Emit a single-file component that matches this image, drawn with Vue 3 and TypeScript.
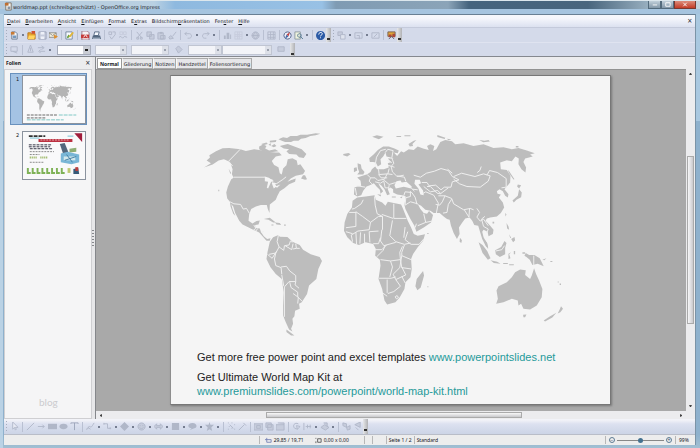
<script setup lang="ts">
import { ref } from 'vue'

interface Shape { d: string; f?: string; s?: string }
interface Tool { kind: 'icon' | 'drop' | 'sep' | 'more' | 'grip' | 'select' | 'spin'; name?: string; size?: string; on?: boolean }

const G = '#b0b7c8'
const L = '#c6ccdc'

const icons: Record<string, Shape[]> = {
  Neu: [{ d: 'M2 1h4l2 2v6H2z', f: '#f4f6fa', s: '#69788f' }, { d: 'M1 1h4v3H1z', f: '#c87a33' }, { d: 'M3 5h4v3H3z', f: '#7698bd' }],
  Öffnen: [{ d: 'M1 2h3l1 1h4v6H1z', f: '#e9a52c', s: '#b9741c' }, { d: 'M5 0h4v3H5z', f: '#d2532e' }, { d: 'M2 5h7L8 9H1z', f: '#ffd561' }],
  Speichern: [{ d: 'M1 1h8v8H1z', f: L, s: '#9ba4b8' }, { d: 'M3 1h4v3H3zM3 6h4v3H3z', f: '#edf0f8' }],
  Senden: [{ d: 'M0 2h8v5H0z', f: '#f4f1e2', s: '#8c8c88' }, { d: 'M0 2l4 3 4-3', s: '#8c8c88' }, { d: 'M5 4l5 2-4 3z', f: '#dd9132' }],
  Bearbeiten: [{ d: 'M1 1h7v8H1z', f: '#f8faff', s: '#73859d' }, { d: 'M2 7l2-3 2 2-3 2z', f: '#63a046' }, { d: 'M4 6l4-5 2 1-4 5z', f: '#e1b739' }],
  PDF: [{ d: 'M1 0h6l2 2v8H1z', f: '#f5f1f4', s: '#9b7487' }, { d: 'M0 4h9v4H0z', f: '#c43a3a' }, { d: 'M3 7l2-3 2 3', s: '#fff' }],
  Drucken: [{ d: 'M3 1h5L7 5H2z', f: '#f7faff', s: '#566983' }, { d: 'M1 5h8l1 4H0z', f: '#53677f' }, { d: 'M1 8h8', s: '#c8d4e4' }],
  Prüfen: [{ d: 'M1 1h3v3H1zM5 1h3v3', s: G }, { d: 'M2 6l2 3 4-5', s: G }],
  AutoPrüfung: [{ d: 'M1 1h3v3H1zM5 1h3v3H5z', s: L }, { d: 'M0 7l2-1 2 2 2-2 3 1', s: G }],
  Ausschneiden: [{ d: 'M2 1l5 6M8 1L3 7', s: G }, { d: 'M2 7h2v2H2zM6 7h2v2H6z', s: G }],
  Kopieren: [{ d: 'M1 1h5v5H1zM4 4h5v5H4z', f: L, s: G }],
  Einfügen: [{ d: 'M1 2h6v7H1zM4 5h5v4H4z', f: L, s: G }, { d: 'M3 1h3v2H3z', f: G }],
  Pinsel: [{ d: 'M9 1L5 6M3 5l3 3-4 1-1-2z', f: L, s: G }],
  Rückgängig: [{ d: 'M1 3h5c3 0 3 5 0 5H4M3 1L1 3l2 2', s: G }],
  Wiederholen: [{ d: 'M9 3H4C1 3 1 8 4 8h2M7 1l2 2-2 2', s: G }],
  Diagramm: [{ d: 'M1 5h2v4H1zM4 2h3v7H4zM8 4h1v5H8z', f: G }],
  Tabelle: [{ d: 'M1 1h8v8H1zM1 4h8M1 6h8M4 1v8M6 1v8', s: L }],
  Hyperlink: [{ d: 'M5 1a4 4 0 1 0 .1 0M1 5h8M5 1c-3 3-3 5 0 8 3-3 3-5 0-8', f: L, s: G }],
  Raster: [{ d: 'M1 1h8v8H1zM1 4h8M1 7h8M4 1v8M7 1v8', s: G }],
  Navigator: [{ d: 'M5 1a4 4 0 1 0 .1 0', f: '#eff2fa', s: '#4a5a83' }, { d: 'M8 1L6 6 4 4z', f: '#c34142' }, { d: 'M2 9l2-5 2 2z', f: '#4567a7' }],
  Lupe: [{ d: 'M1 1h6v8H1z', f: '#eef2dd', s: '#8b98a0' }, { d: 'M6 3a2 2 0 1 0 .1 0M7 6l3 3', s: '#4b728d' }],
  Hilfe: [{ d: 'M5 0a5 5 0 1 0 .1 0', f: '#2b5aa5' }, { d: 'M3 4c0-3 4-3 4-1 0 2-2 1-2 3M5 7v1', s: '#fff' }],
  Folie: [{ d: 'M1 1h5v4H1z', f: L, s: G }, { d: 'M4 4h5v5H4z', f: '#dfe3ee', s: G }],
  Layout: [{ d: 'M1 2h8v6H1zM3 5h3v4', s: G }],
  Entwurf: [{ d: 'M1 2h8v6H1zM3 7l4-4', s: G }],
  Präsentation: [{ d: 'M1 1h8v5H1z', f: '#e0a638', s: '#765f51' }, { d: 'M2 4h3v3H2zM6 3h3v4H6z', f: '#a9483d' }, { d: 'M2 9l3-3 3 3', s: '#5e6575' }],
  Punkte: [{ d: 'M1 2h7v5H1zM3 7l5 2', s: G }],
  Linienstil: [{ d: 'M5 0l3 8H2zM5 3v4', s: G }],
  Pfeilstil: [{ d: 'M1 3h6M5 1l3 2-3 2M3 7h6M4 5L2 7l2 2', s: G }],
  Füllung: [{ d: 'M2 4l3-3 4 4-4 4z', f: L, s: G }],
  Schatten: [{ d: 'M1 2h7v5H1z', f: L, s: G }],
  Auswahl: [{ d: 'M3 0v8l2-2 1 3 1-1-1-2h3z', f: '#e8ebf5', s: G }],
  Linie: [{ d: 'M1 9l8-8', s: G }],
  Pfeil: [{ d: 'M1 5h7M6 3l2 2-2 2', s: G }],
  Rechteck: [{ d: 'M0 2h10v6H0z', f: G }],
  Ellipse: [{ d: 'M5 2C-1 2-1 8 5 8s6-6 0-6', f: G }],
  Text: [{ d: 'M1 2V1h8v1M5 1v8', s: '#9aa3b8' }],
  Kurve: [{ d: 'M0 8c3 1 2-4 4-3s2 1 5-4M2 6l3 2', s: G }],
  Verbinder: [{ d: 'M1 2h4v5h4M1 1v2M8 6v2', s: G }],
  Formen: [{ d: 'M5 0l5 5-5 5-5-5z', f: G }],
  Symbole: [{ d: 'M5 1a4 4 0 1 0 .1 0M3 4h1M6 4h1M3 6c1 2 3 2 4 0', f: L, s: G }],
  Blockpfeile: [{ d: 'M0 5l3-3v2h4V2l3 3-3 3V6H3v2z', f: L, s: G }],
  Flussdiagramm: [{ d: 'M1 1h8v8H1zM1 3h8', f: G }],
  Legenden: [{ d: 'M5 1C-1 1-1 7 4 7L2 9l5-2c4-1 3-6-2-6', f: G }],
  Sterne: [{ d: 'M5 0l1 3h4L7 6l1 4-3-2-3 2 1-4L0 3h4z', f: G }],
  Punktwahl: [{ d: 'M1 1h1M5 1h1M8 3h1M2 5h1M1 8h1M5 7h1M8 8h1M3 3l4 4', s: G }],
  Kleber: [{ d: 'M1 9l6-6M6 1l3 3', s: G }],
  Fontwork: [{ d: 'M0 2h10v7H0zM3 4h4v3H3z', f: L, s: G }],
  Bild: [{ d: 'M1 1h6v5H1zM3 3h6v6H3z', f: L, s: G }],
  Galerie: [{ d: 'M0 3h9v6H0zM2 1h7v2', f: L, s: G }],
  Drehen: [{ d: 'M7 2C3 0 0 4 3 7l3 1M5 4l4 1-3 3z', s: G }],
  Ausrichten: [{ d: 'M1 1v8M3 5h6M5 3v4M8 3v4', s: G }],
  Anordnen: [{ d: 'M1 6l4-3 5 3-4 3zM4 1h4v4', f: L, s: G }],
  Extrusion: [{ d: 'M1 1l4 1v4L1 4zM5 6l4-2v4L6 9z', f: L, s: G }],
  Effekt: [{ d: 'M8 0v6L2 3zM3 6l3 3', f: L, s: G }],
}

// "|" separator, "v" drop-down arrow, ">" overflow handle, ":" grip
function bar(spec: string): Tool[] {
  return spec.split(' ').map((t): Tool => {
    if (t === '|') return { kind: 'sep' }
    if (t === 'v') return { kind: 'drop' }
    if (t === '>') return { kind: 'more' }
    if (t === ':') return { kind: 'grip' }
    if (t.startsWith('#')) return { kind: 'select', size: t.slice(1), on: t === '#style' }
    if (t === '=') return { kind: 'spin' }
    return { kind: 'icon', name: t }
  })
}

const bars: { id: string; label: string; tools: Tool[] }[] = [
  { id: 'std', label: 'Standard', tools: bar(': Neu v Öffnen Speichern Senden | Bearbeiten | PDF Drucken | Prüfen AutoPrüfung | Ausschneiden Kopieren Einfügen Pinsel | Rückgängig v Wiederholen v | Diagramm Tabelle v Hyperlink | Raster | Navigator Lupe v | Hilfe > : Folie v Layout v Entwurf | Präsentation >') },
  { id: 'outline', label: 'Linie und Füllung', tools: bar(': Punkte | Linienstil Pfeilstil v #style = #color Füllung #fill #pattern Schatten >') },
]
const drawTools = bar(': Auswahl | Linie Pfeil Rechteck Ellipse Text | Kurve v Verbinder v Formen v Symbole v Blockpfeile v Flussdiagramm v Legenden v Sterne v | Punktwahl Kleber | Fontwork Bild Galerie | Drehen Ausrichten v Anordnen v | Extrusion Effekt >')

const menus: [string, string, string][] = [
  ['', 'D', 'atei'], ['', 'B', 'earbeiten'], ['', 'A', 'nsicht'], ['', 'E', 'infügen'], ['', 'F', 'ormat'],
  ['E', 'x', 'tras'], ['Bildschirm', 'p', 'räsentation'], ['Fen', 's', 'ter'], ['', 'H', 'ilfe'],
]
const tabs = ['Normal', 'Gliederung', 'Notizen', 'Handzettel', 'Foliensortierung']
const tab = ref('Normal')
const slide = ref(1)
const zoom = ref(50)

// Each region is drawn in its own local grid, three units to a map unit
const americas = [
  'M24 125L45 112 32 104 42 95 40 88 60 76 80 67 100 66 133 70 150 75 175 70 200 74 220 78 240 80 250 80 258 88 240 92 228 105 235 117 248 124 252 142 258 146 262 128 272 118 276 100 290 97 303 104 306 118 314 115 328 135 322 145 300 150 285 158 275 168 285 163 300 158 298 168 280 175 266 187 252 196 245 210 240 222 222 236 221 262 216 250 213 238 195 238 180 242 166 250 160 265 158 285 170 293 182 286 192 284 188 296 178 298 178 306 192 308 195 318 204 332 214 340 224 338 222 345 212 345 200 332 190 320 172 312 160 306 140 296 130 285 118 262 112 242 106 235 110 250 118 270 112 264 104 242 102 228 94 218 91 200 96 182 106 160 113 156 108 145 110 130 104 112 96 105 84 100 68 104 50 116z',
  'M222 348L232 335 248 328 252 333 275 334 290 348 312 358 322 372 345 386 372 394 379 406 368 430 362 460 340 480 334 505 318 530 310 535 312 550 298 556 296 572 290 580 292 595 286 610 290 618 280 612 270 590 262 570 262 540 264 500 258 460 240 445 224 425 212 400 215 380z',
  'M272 612l8 6 16 12-10 0-14-10zM204 280l18-4 18 14-8 0-14-8zM238 290l14 2 4 6-14-2zM265 296h5v4h-5zM227 296h6v3h-6zM316 158l6-10 6 0 6 12-6 2zM98 128l8 14-3 2zM67 192h3v4h-3z',
  'M190 62l12-6 10 4-4 8 12 6 18-4 10 6-28 4-20-4-10-6zM196 54l16-4 4 4-14 4zM222 44l20-2-2 6-18 2zM248 40l14-6 12 2 10-6 20 0 10-4 20 0 26-4 14 1-14 5-16 2-14 6-14 2-8 6-14 0-8 4-18 0-10-4zM252 60l24-6 20 8 22 8 14 14-8 12-14-2-8-8-22-2-8-8 8-6-16-2zM226 60l10-6 6 6-8 4zM218 56l8-4-2 8z',
]
const americaLines = [
  'M133 70L98 106l12 14', 'M113 154l94 0 8 5 16 4 0 10 12 0 18-12 10-8',
  'M102 228l12 6 20 2 8 14 10-2 8 14', 'M174 298l6 10-8 6M186 308l-6 8M196 320l8-2',
  'M248 328l-4 20 6 16-10 18-20 4M250 364l14 10 2-14 14-2 4-12 6 4M268 360l20 12 4-18M292 370l10-2-2-14M302 368l10 0',
  'M215 386l14 12 14-22M240 382l-4 18 4 20 16 6 2 20M256 424l16-2 10 14 18 14 0 18-20 0-14 16 0 90M282 470l4 16 20 14 0 14-14-10 M306 514l14 14M258 448l6 34M300 468l-2 10 12 10M308 514l-2 20',
]
const afroEurasia = [
  'M118 108L116 97 130 85 142 72 158 62 175 62 192 68 205 74 202 82 190 80 200 90 212 76 220 80 235 70 250 72 262 62 278 68 295 72 290 60 300 55 312 60 308 75 318 70 330 48 345 42 365 46 375 55 400 52 430 60 460 55 490 66 520 64 545 70 565 66 590 74 614 82 600 86 608 92 585 98 580 108 588 125 586 140 574 130 565 115 566 98 556 92 545 106 530 103 510 110 512 130 530 132 541 150 540 170 530 182 523 190 535 205 533 215 525 210 518 196 508 190 500 196 502 204 512 206 506 215 518 230 522 245 512 262 500 272 480 275 470 278 466 285 480 300 490 312 488 325 475 332 472 318 460 312 456 318 460 335 470 352 474 370 466 360 456 340 450 320 444 300 432 298 426 285 418 275 405 278 395 292 386 305 388 325 380 340 370 322 362 300 358 282 350 280 340 272 328 262 310 262 300 255 285 252 272 240 262 235 270 250 280 262 290 264 296 256 308 268 302 290 280 305 258 318 252 300 240 280 225 250 222 238 226 212 215 208 200 206 188 200 188 190 180 185 172 190 178 205 170 208 162 190 152 178 143 172 150 185 158 196 150 204 148 192 138 182 130 172 118 178 108 182 98 195 92 208 80 212 70 206 72 184 92 180 90 165 80 155 96 150 110 145 120 138 124 130 134 122 140 130 160 130 175 125 172 112 182 108 172 98 190 98 178 94 168 92 165 80 158 92 150 100 152 115 142 122 136 110 128 108z',
  'M66 225L80 215 105 212 132 208 136 222 155 230 165 240 172 228 190 232 212 236 218 250 232 285 242 305 250 325 262 330 284 326 278 345 262 365 248 385 242 400 244 430 240 455 225 470 222 490 208 515 195 530 170 537 162 525 155 490 144 460 150 420 148 402 134 390 136 370 128 355 105 350 85 358 68 352 50 335 40 315 42 290 50 265 64 245z',
  'M278 436l3 14-10 36-10 8-6-12 4-22zM81 112l10 4 2 12 9 10-4 8-18 0 6-8-4-10zM70 126l8-2 2 10-10 5zM38 84l16-3 6 4-10 7-12-4zM125 32l14-4 20 4-14 8zM234 54l16-10 8-2-12 12 2 6-10 2zM198 30h14v3h-14zM222 28h18v3h-18zM140 205l12 2-2 5zM184 212h12v3h-12zM208 214l8-2-2 5zM290 322h5v2h-5zM291 482h3v3h-3z',
]
const euraLines = [
  'M188 74l-4 22 6 16-8 10 4 16 12 12 24 4 4 12M188 74l-16-4-8 10M134 118l4-24 12-20 16-4M170 104l14 6M172 118l20 6M176 128l-4 16-26 2-2-16M172 144l14 2M110 146l10 10-4 10 8 8M120 156l14 0 8 8 20-4 8-16M74 186l4 22M80 180l24 4M134 168l16 4 12-8 14 12 20-6M160 166l4 20 12 0M176 178l-2 12M144 146l8 10 18 0M200 152l20-4',
  'M250 148l20 6 18-12 24-6 20-8 22 6 12 18 20 10-20 6-4 16-20 0-10 8-16-14-20 2-6-10-16 0M246 190l16 2M240 184l12 12M220 210l4-12 20 2 10 14 6 22M226 216l14-4 0-16M226 216l-2 22 16-10 22 6M262 300l24-10 20-4 M286 290l-6-26M254 306l4-12M280 182l20 16 22-4 10 10M276 204l10-6 24 10 14 24-6 30M290 182l10 0 20 20 10 2M324 210l20 0 20 8 6 16 30 18 20-4 10 4M344 210l-8 18-8 10-12-2M364 220l-10 16-4 24-12 2',
  'M370 152l24-10 40 10 26-8 20 6-6 16-24 18-40-2-22-8-18-14M470 148l8-14 24 6 26 18 0 26-14 2M352 130l14 12M418 248l-2 26M402 252l14 22M440 248l8 12-8 14 10 12M464 272l-10 8 6 22 14 8-4 12M450 286l10-6 14 20M330 204l24-18',
]
const afroLines = [
  'M98 222l-6 12-20 14-8 2M76 258l20 14 24 18-4 22 M132 212l2 26 6 26 16 8M120 290l24-18 12 0 0 40M190 234l0 44 38 0M188 278l-34-12M76 258l0 44-30 4M56 260l20 0M186 284l-8 46 18 18 26 8 18-4M154 312l-4 34 10 14 36-10M116 312l-34 4-20 12 4 20M116 318l28-2M116 318l2 32M46 318l20 6M90 320l-2 34M102 324l0 28M76 320l2 36M128 354l16 0 6-18M134 372l20 0 14-14M138 394l20-20 6-14M150 402l30 4 6 18-8 30M146 458l36 0 14-4M180 406l30-4-2-22 8-18M222 358l-8 22 0 10 28 12M214 390l-6 36-20 20 8 16 30-14-12-24M210 402l4 24 28 4M170 462l0 40M196 462l14 20-20 16-18 6 M214 452l10 20M232 318l-8 24 18 14 24 0 14-16M224 304l-4 32M156 502l14 10M194 514l6-4 4 6-6 4z',
]
const oceania = [
  'M183 535L188 520 184 495 190 482 215 470 230 455 240 440 255 432 272 434 270 448 285 460 290 450 297 428 303 445 312 465 322 490 320 515 305 540 285 552 265 550 258 535 250 540 248 525 230 520 205 530z',
  'M264 568l10-1-4 8-5 0zM378 542l6 8-8 10-8 4 6-12zM364 562l-12 14-22 12-4-3 18-12zM272 382l10 6 16 0 16 10 12 24-18-8-16 4-8-16-10-8-6-4zM180 374l18-10 10-18 6 6-4 14 0 20-16 8-12-8zM130 350l12 8 14 18 10 22-8 4-16-20zM166 404l20 4 10 6-20-2zM148 342l8 10 3 14-6-4zM220 384l8-4-6 6 4 12-6 2zM74 336l6 8-2 8-5-4zM214 292l6 10 2 10-6-4zM228 340l10-6 2 10-6 6zM204 412h14v3h-14zM222 416h14v3h-14zM236 376h4v10h-4zM262 380h8v4h-8zM322 402l12-4-6 6zM346 406h6v3h-6zM368 468h3v3h-3zM374 474h4v4h-4zM248 176l10 2-6 10-6-6zM252 190l8 10-2 14-14 8-8 8-4-6 16-14zM218 132l4 4 16 24-3 1-14-20zM210 262l4 4-3 6zM172 288h5v5h-5zM222 326l6 10-3 1zM6 27l24 8-2 4-22-6zM34 38l14 2-8 3zM132 42l16 2 12-2 4 5-20 2zM242 60h8v5h-8z',
]
const oceaniaLines = ['M296 390v28M182 376l18-4 8-12', 'M126 140q10-4 12-18']
</script>

<template>
  <div class="window">
    <header class="title">
      <svg class="app-icon" viewBox="0 0 10 10"><path d="M2 1h6v8H2z" fill="#f5f3ed" stroke="#7b7164" /><path d="M1 1h4v3H1z" fill="#be6f32" /><path d="M4 5h3v3H4z" fill="#8794a4" /></svg>
      <h1>worldmap.ppt (schreibgeschützt) - OpenOffice.org Impress</h1>
      <div class="controls">
        <button aria-label="Minimieren"><svg viewBox="0 0 12 8"><path d="M4 4h5v1H4z" fill="#fff" /></svg></button>
        <button aria-label="Maximieren"><svg viewBox="0 0 12 8"><path d="M4 2h5v4H4z" fill="none" stroke="#fff" /></svg></button>
        <button class="quit" aria-label="Beenden"><svg viewBox="0 0 12 8"><path d="M4 2l4 4M8 2L4 6" stroke="#fff" /></svg></button>
      </div>
    </header>

    <div class="frame">
      <nav class="menu">
        <a v-for="m in menus" :key="m[2]" href="#">{{ m[0] }}<u>{{ m[1] }}</u>{{ m[2] }}</a>
        <button class="x" aria-label="Dokument schließen">×</button>
      </nav>

      <div v-for="b in bars" :key="b.id" class="bar" :class="b.id" role="toolbar" :aria-label="b.label">
        <template v-for="(t, i) in b.tools" :key="i">
          <button v-if="t.kind === 'icon'" class="tool" :aria-label="t.name">
            <svg viewBox="0 0 10 10"><path v-for="(p, k) in icons[t.name!]" :key="k" :d="p.d" :fill="p.f || 'none'" :stroke="p.s || 'none'" /></svg>
          </button>
          <select v-else-if="t.kind === 'select'" class="pick" :class="[t.size, { live: t.on }]" :aria-label="t.size"><option></option></select>
          <input v-else-if="t.kind === 'spin'" class="spin" type="text" aria-label="Breite">
          <span v-else :class="t.kind"></span>
        </template>
      </div>

      <main class="work">
        <aside class="panel">
          <div class="panel-head"><h2>Folien</h2><button class="x" aria-label="Folien schließen">×</button></div>
          <div class="panel-body">
            <button class="thumb" :class="{ chosen: slide === 1 }" @click="slide = 1">
              <span>1</span>
              <svg viewBox="0 0 64 48">
                <g transform="translate(5 8) scale(.045)" fill="#b4b4b4">
                  <path v-for="d in americas" :key="d" :d="d" />
                  <g transform="translate(405 0)"><path v-for="d in afroEurasia" :key="d" :d="d" /></g>
                  <g transform="translate(720 0)"><path v-for="d in oceania" :key="d" :d="d" /></g>
                </g>
                <path d="M4 40h32M4 43h20" stroke="#666" stroke-dasharray="3 1" /><path d="M37 40h18M4 45h38" stroke="#7cc6c4" stroke-dasharray="4 1" />
              </svg>
            </button>
            <button class="thumb" :class="{ chosen: slide === 2 }" @click="slide = 2">
              <span>2</span>
              <svg viewBox="0 0 64 48">
                <path d="M6 4h17" stroke="#333" stroke-width="2" stroke-dasharray="4 1" /><path d="M7 6h10M46 4h6" stroke="#74bfd1" />
                <path d="M16 7h35v3H16z" fill="#bb3040" /><path d="M53 1h8v9z" fill="#a01d3c" /><path d="M18 8h30" stroke="#e8b2b5" stroke-dasharray="2 1" />
                <path d="M6 13h24M6 15h22M7 17h23" stroke="#334" stroke-dasharray="3 1" /><path d="M7 20h25M7 23h10M7 31h15" stroke="#888" stroke-dasharray="2 1" />
                <path d="M7 26h8M18 26h7" stroke="#8aaa48" stroke-width="2" stroke-dasharray="1 1" />
                <path d="M38 12l5-1 4 10-5 3z" fill="#53677c" /><path d="M48 17l7-1v4l-7 1z" fill="#8fae73" />
                <path d="M39 22l7-2 12 3 0 8-8 2-11-2z" fill="#79b6d6" /><path d="M42 25h12v4H42z" fill="#d3e8ec" /><path d="M45 23l6 8M43 29l12-4" stroke="#427fa4" />
                <path d="M5 37v5h3M10 37v5h3M15 37v5h3M20 37v5h3M25 37v5h3M30 37v5h3M35 37v5h3M40 37v5h3" stroke="#7fb257" stroke-width="2" fill="none" />
                <path d="M46 37h3v5h-3z" fill="#bfc971" /><path d="M52 38l5-1 1 6h-6z" fill="#375a78" /><path d="M54 36h3v4h-3z" fill="#b93f3d" />
              </svg>
            </button>
            <p class="mark">blog</p>
          </div>
        </aside>
        <div class="splitter"><i></i></div>

        <section class="editor">
          <div class="tabs" role="tablist">
            <button v-for="t in tabs" :key="t" role="tab" :class="{ open: tab === t }" @click="tab = t">{{ t }}</button>
          </div>
          <div class="view">
            <div class="canvas">
              <article class="slide">
                <svg class="map" viewBox="0 0 385 215">
                  <g transform="scale(.3333)">
                    <path v-for="d in americas" :key="d" class="land" :d="d" />
                    <path v-for="d in americaLines" :key="d" class="border" :d="d" />
                    <path class="sea" d="M207 152l12 4 12 8-6 6-8 18-4-2 4-18-10-2zM228 172l8-2 6 12-8 6zM238 182l16-6-10 10z" />
                    <g transform="translate(405 0)">
                      <path v-for="d in afroEurasia" :key="d" class="land" :d="d" />
                      <path class="sea" d="M192 178l6-12 12-2 4 6 14-2 16 14-2 6-22-5-24 5zM254 162l14 0 4 10-8 4 14 18 2 14-10-2-6-18-12-14z" />
                      <path v-for="d in euraLines" :key="d" class="border" :d="d" />
                      <path v-for="d in afroLines" :key="d" class="border" :d="d" />
                    </g>
                    <g transform="translate(720 0)">
                      <path v-for="d in oceania" :key="d" class="land" :d="d" />
                      <path v-for="d in oceaniaLines" :key="d" class="border" :d="d" />
                    </g>
                  </g>
                </svg>
                <div class="copy">
                  <p>Get more free power point and excel templates <a href="#">www.powerpointslides.net</a></p>
                  <p>Get Ultimate World Map Kit at<br><a href="#">www.premiumslides.com/powerpoint/world-map-kit.html</a></p>
                </div>
              </article>
            </div>
            <div class="vscroll"><b class="up"></b><i></i><b class="down"></b></div>
          </div>
          <div class="hscroll"><b class="left"></b><i></i><b class="right"></b></div>
        </section>
      </main>

      <div class="bar draw" role="toolbar" aria-label="Zeichnen">
        <template v-for="(t, i) in drawTools" :key="i">
          <button v-if="t.kind === 'icon'" class="tool" :aria-label="t.name">
            <svg viewBox="0 0 10 10"><path v-for="(p, k) in icons[t.name!]" :key="k" :d="p.d" :fill="p.f || 'none'" :stroke="p.s || 'none'" /></svg>
          </button>
          <span v-else :class="t.kind"></span>
        </template>
      </div>

      <footer class="status">
        <span class="lead"></span>
        <span class="pos"><svg viewBox="0 0 8 8"><path d="M2 1v5M0 3h7v3H2" fill="none" stroke="#7480b5" /></svg>29,85 / 19,71</span>
        <span class="dim"><svg viewBox="0 0 8 8"><path d="M1 1v1M1 5v2M3 2h4v4H3z" fill="none" stroke="#555" /></svg>0,00 x 0,00</span>
        <span class="gap"></span><span class="gap wide"></span>
        <span class="page">Seite 1 / 2</span>
        <span class="style">Standard</span>
        <span class="zoom">
          <button aria-label="Verkleinern">−</button>
          <input v-model="zoom" type="range" min="0" max="100" aria-label="Zoom">
          <button aria-label="Vergrößern">+</button>
        </span>
        <span class="pct">99%</span>
      </footer>
    </div>
  </div>
</template>

<style>
body { margin: 0; }
</style>

<style scoped>
* { box-sizing: border-box; }
h1, h2, p { margin: 0; font: inherit; }
button, select, input { margin: 0; padding: 0; border: 0; background: none; font: inherit; color: inherit; border-radius: 0; }
svg { display: block; }

.window {
  min-height: 100vh; display: flex; flex-direction: column; overflow: hidden;
  font: 5px/8px "DejaVu Sans", "Noto Sans", sans-serif; color: #14161c;
  background: linear-gradient(90deg, #bad2e5 0 3px, transparent 3px), linear-gradient(#a9c8e0 0 27%, #8eb1cd 27% 97%, #a2bfd2);
}
.title {
  height: 14px; display: flex; align-items: flex-start; padding: 2px 4px 0 4px;
  background:
    linear-gradient(transparent 9px, #a5c4df 9px),
    linear-gradient(#dce7ed 1px, transparent 1px),
    linear-gradient(90deg, #b5cadb 0, #b9d0e2 22%, #8eb9df 25%, #98c1e5 46%, #7f9bb3 48%, #8ba4b8 64%, #45647e 67%, #49667e 84%, #9bb2c2 93%, #c4d4de);
}
.app-icon { width: 9px; height: 9px; }
.title h1 { flex: 1; line-height: 10px; }
.controls { display: flex; margin-top: -1px; }
.controls button { width: 13px; height: 8px; border: 1px solid #536b7c; border-top: 0; background: linear-gradient(#c1d0da, #8297a8); }
.controls button svg { width: 100%; height: 7px; }
.controls .quit { width: 22px; border-color: #7a3930; background: linear-gradient(#dc8d7c, #c33b26); }

.frame { flex: 1; display: flex; flex-direction: column; margin: 0 4px 3px; background: #ececee; border-top: 1px solid #687f93; border-right: 1px solid #7b93a6; }
.menu { height: 12px; display: flex; align-items: center; gap: 5px; padding: 0 3px; background: linear-gradient(#f5f7fc 3px, #dce1f0); }
.menu a { color: inherit; text-decoration: none; }
.x { font-family: "Noto Sans", sans-serif; font-size: 8px; line-height: 8px; color: #33363e; }
.menu .x { margin-left: auto; }

.bar { display: flex; align-items: center; height: 15px; background: #d4daea; border-top: 1px solid #c4cadb; }
.bar.outline { height: 14px; border-top-color: #dfe3f0; }
.bar.draw { height: 15px; border: 0; background: linear-gradient(#f2f3f8 1px, #dce1f0 5px, #ccd4e6); }
.tool { width: 11px; height: 11px; flex: none; }
.tool svg { width: 9px; height: 9px; margin: 1px; }
.drop { flex: none; width: 6px; height: 2px; background: linear-gradient(#757d90, #757d90) center / 2px 2px no-repeat; }
.sep { flex: none; width: 5px; height: 10px; background: linear-gradient(#b9c0d2, #b9c0d2) center / 1px 10px no-repeat; }
.grip { flex: none; width: 5px; height: 11px; background: repeating-linear-gradient(#a6adbe 0 1px, transparent 1px 3px) 2px 0 / 1px 11px no-repeat; }
.more { flex: none; width: 5px; height: 100%; background: linear-gradient(#333, #333) center 10px / 3px 2px no-repeat, linear-gradient(90deg, #e6e7e9, #b1b2b5); }
.pick, .spin {
  flex: none; height: 10px; width: 38px; margin-right: 4px; border: 1px solid #c0c5d2; appearance: none;
  background: linear-gradient(#9ba1ae, #9ba1ae) right 2px center / 2px 2px no-repeat, linear-gradient(#dde0e8, #dde0e8) right / 6px 100% no-repeat, #f3f4f8;
}
.pick.live { width: 34px; margin-left: 4px; border-color: #a5abba; background: linear-gradient(#222, #222) right 2px center / 3px 2px no-repeat, linear-gradient(#c9ccd4, #c9ccd4) right / 7px 100% no-repeat, #fcfcfe; }
.spin { width: 32px; }
.pick.fill { width: 34px; margin: 0 0 0 4px; }
.pick.pattern { width: 50px; }
.outline .more { margin-left: 3px; }

.work { flex: 1; display: flex; min-height: 0; border-top: 1px solid #85888f; }
.panel { width: 88px; display: flex; flex-direction: column; background: #ececee; }
.panel-head { height: 12px; display: flex; align-items: center; justify-content: space-between; padding: 0 2px; }
.panel-head h2 { font-weight: 700; font-family: "Noto Sans", sans-serif; }
.panel-body { flex: 1; display: flex; flex-direction: column; gap: 4px; padding: 3px 5px 9px; background: #f5f5f6; border: 1px solid #cfcfd2; }
.thumb { display: flex; justify-content: space-between; width: 77px; height: 52px; padding: 1px 0 0 5px; border: 1px solid transparent; text-align: left; }
.thumb.chosen { background: #a4c3e4; border-color: #6991bd; }
.thumb svg { width: 64px; height: 49px; background: #f9f9fa; border: 1px solid #8b939e; }
.mark { margin-top: auto; padding-left: 29px; color: #cbcbce; font: 10px/14px Lato, sans-serif; }
.splitter { width: 4px; display: flex; align-items: center; border-right: 1px solid #85878b; background: #e7e7e9; }
.splitter i { width: 2px; height: 16px; background: repeating-linear-gradient(#85878b 0 1px, transparent 1px 3px); }

.editor { flex: 1; display: flex; flex-direction: column; min-width: 0; }
.tabs { height: 12px; display: flex; padding: 1px 1px 0; background: #ececee; }
.tabs button { padding: 0 1px; border: 1px solid #aaa; border-left-color: #f8f8f8; background: #e6e6e9; white-space: nowrap; }
.tabs .open { padding: 0 2px; background: #fff; font-weight: 700; font-family: "Noto Sans", sans-serif; border-color: #999; }
.view { flex: 1; display: flex; }
.canvas { flex: 1; display: flex; padding: 5px 75px 6px 74px; background: #a9a9a9; border-top: 1px solid #929292; }
.slide { flex: 1; display: flex; flex-direction: column; padding-top: 50px; background: #f5f5f5; border: 1px solid #777; border-left-color: #8e8e8e; box-shadow: 1px 1px 2px #777; }
.map { margin: 0 30px 0 25px; }
.land { fill: #bdbdbd; }
.border { fill: none; stroke: #efefef; stroke-width: 3; stroke-linejoin: round; }
.sea { fill: #f5f5f5; }
.copy { padding: 10px 26px 0; font: 11px/14px "Liberation Sans", Arial, sans-serif; color: #222; white-space: nowrap; }
.copy p + p { margin-top: 6px; }
.copy a { color: #1f9a9a; text-decoration: none; }

.vscroll { width: 9px; display: flex; flex-direction: column; align-items: center; padding: 3px 1px; background: #ececee; }
.vscroll i { width: 7px; height: 50%; margin: 81px 0 auto; border: 1px solid #aaa; background: linear-gradient(90deg, #f7f7f8, #c9c9cd); }
.hscroll b, .vscroll b { border: 1px solid transparent; width: 3px; height: 3px; }
.vscroll .up { border-bottom: 2px solid #444; }
.vscroll .down { border-top: 2px solid #444; }
.hscroll { height: 8px; display: flex; align-items: center; padding: 0 12px 0 3px; background: #ececee; }
.hscroll .left { border-right: 2px solid #444; }
.hscroll .right { border-left: 2px solid #444; }
.hscroll i { width: 44%; height: 6px; margin: 0 auto 0 28%; border: 1px solid #aaa; background: linear-gradient(#f8f8f8, #c8c8cb); }

.status { height: 11px; display: flex; align-items: center; background: #ededed; border-top: 1px solid #b9bdc8; white-space: nowrap; font-family: "Noto Sans", sans-serif; }
.status > span { height: 8px; display: flex; align-items: center; border-right: 1px solid #b7b7b7; }
.status .lead { width: 37%; }
.status svg { width: 7px; height: 7px; margin-right: 2px; }
.status .pos { width: 55px; padding-left: 5px; border: 0; }
.status .dim { width: 50px; border-right: 1px solid #b7b7b7; }
.status .gap { width: 8px; }
.status .wide { width: 14px; }
.status .page, .status .style { padding: 0 2px; }
.status .style { flex: 1; }
.status .zoom { padding: 0 3px; }
.zoom button { width: 6px; height: 6px; border: 1px solid #5f7c94; border-radius: 50%; color: #36536d; line-height: 3px; }
.zoom input { width: 47px; height: 6px; margin: 0 2px; appearance: none; background: linear-gradient(#888, #888) center / 100% 1px no-repeat; }
.zoom input::-webkit-slider-thumb { appearance: none; width: 5px; height: 5px; border-radius: 50%; background: #44718f; }
.status .pct { width: 19px; padding-left: 3px; border: 0; }
</style>
